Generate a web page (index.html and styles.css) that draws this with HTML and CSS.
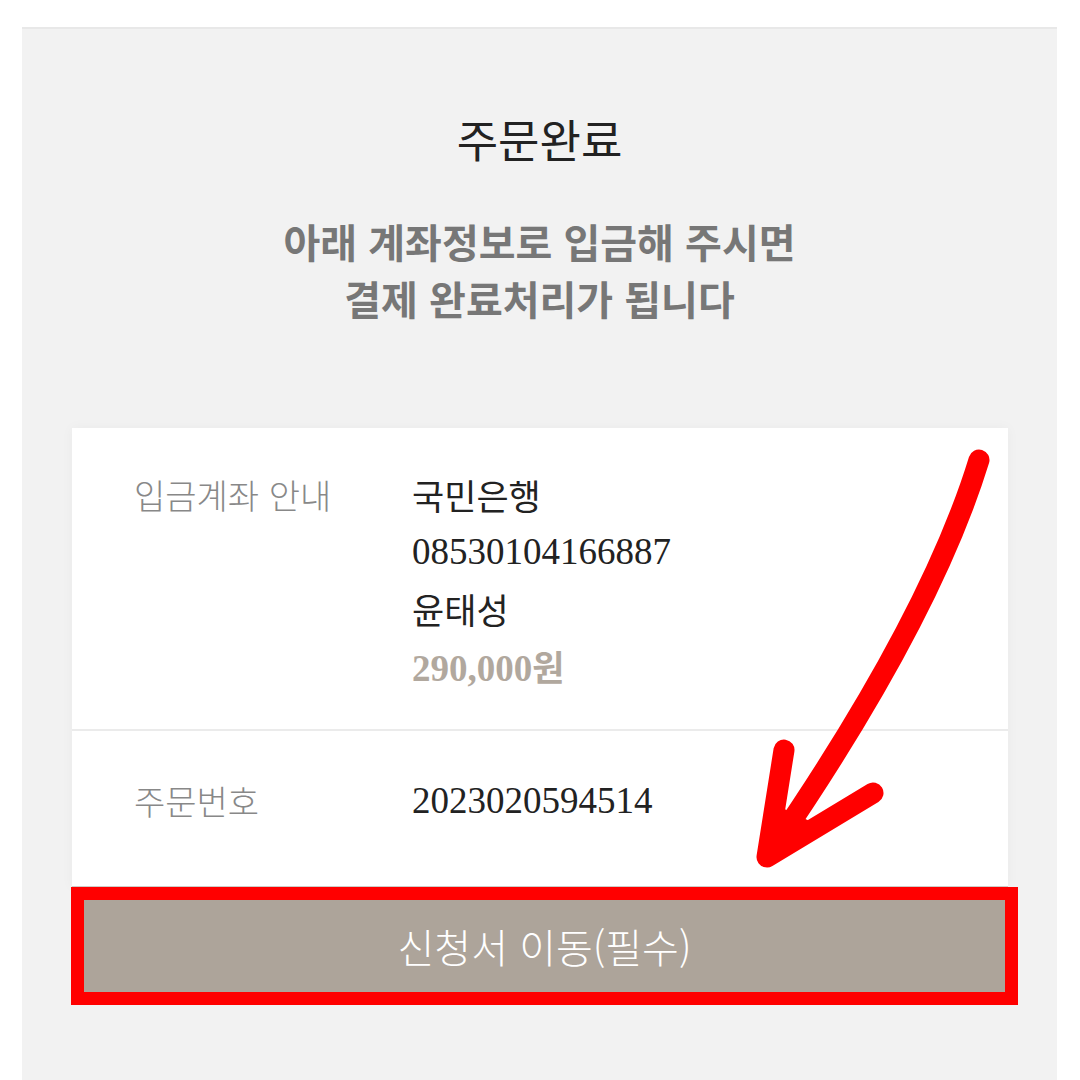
FILE: index.html
```html
<!DOCTYPE html>
<html lang="ko">

<head>
    <meta charset="UTF-8">
    <meta name="viewport" content="width=device-width, initial-scale=1.0">
    <title>주문완료</title>
    <link rel="stylesheet" href="styles.css">
</head>

<body>
    <div class="panel">
        <h1 class="title">주문완료</h1>
        <p class="notice">아래 계좌정보로 입금해 주시면<br>결제 완료처리가 됩니다</p>

        <div class="order-box">
            <div class="info">
                <div class="row row-bank">
                    <div class="label">입금계좌 안내</div>
                    <div class="value">
                        <div class="line">국민은행</div>
                        <div class="line num">08530104166887</div>
                        <div class="line">윤태성</div>
                        <div class="line price"><span class="num">290,000</span>원</div>
                    </div>
                </div>
                <div class="row row-order">
                    <div class="label">주문번호</div>
                    <div class="value">
                        <div class="line num">2023020594514</div>
                    </div>
                </div>
            </div>
            <!-- 빨간 박스로 강조된 버튼 -->
            <div class="btn-wrap">
                <a class="btn" href="#apply">신청서 이동(필수)</a>
            </div>
        </div>
    </div>

    <!-- 손으로 그린 화살표 -->
    <svg class="arrow" width="1080" height="1080" viewBox="0 0 1080 1080">
        <path d="M979 460 Q 930 620 772 850" fill="none" stroke="#ff0000" stroke-width="21" stroke-linecap="round" />
        <path d="M784 750 L767 857 L873 793" fill="none" stroke="#ff0000" stroke-width="21" stroke-linecap="round" stroke-linejoin="round" />
        <polygon points="776 805 767 857 818 825" fill="#ff0000" />
    </svg>
</body>

</html>
```

FILE: styles.css
```css
body {
    margin: 0;
    background-color: #fff;
    font-family: 'Noto Sans CJK KR', 'Noto Sans', sans-serif;
    color: #222;
    position: relative;
    overflow: hidden;
}

.panel {
    margin: 27px 23px 0 22px;
    border-top: 2px solid #e8e8e8;
    background-color: #f2f2f2;
    min-height: 1060px;
    padding-top: 82px;
    box-sizing: border-box;
}

.title {
    margin: 0;
    text-align: center;
    font-size: 45px;
    font-weight: 400;
    line-height: 56px;
    color: #222;
}

.notice {
    margin: 46px 0 0;
    text-align: center;
    font-size: 40px;
    font-weight: 700;
    line-height: 57px;
    color: #777;
}

.order-box {
    margin: 101px 49px 0 50px;
}

.info {
    background-color: #fff;
    box-shadow: 0 0 12px rgba(0, 0, 0, 0.04);
    border-bottom: 1px solid #cfcbc6;
}

.row {
    display: flex;
    padding-left: 62px;
}

.row-bank {
    padding-top: 38px;
    padding-bottom: 35px;
    border-bottom: 2px solid #ebebeb;
}

.row-order {
    padding-top: 41px;
    padding-bottom: 57px;
}

.label {
    width: 278px;
    flex-shrink: 0;
    font-size: 34px;
    font-weight: 300;
    line-height: 57px;
    color: #888;
}

.value {
    font-size: 35px;
    color: #222;
}

.line {
    height: 57px;
    line-height: 57px;
}

.num {
    font-family: 'Liberation Serif', serif;
    font-size: 37px;
}

.price {
    font-weight: 700;
    color: #b1a89e;
}

.btn-wrap {
    margin: 0 -10px 0 -1px;
    border: 13px solid #ff0000;
}

.btn {
    display: block;
    height: 92px;
    line-height: 92px;
    background-color: #ada49a;
    text-align: center;
    color: #fff;
    font-size: 40px;
    font-weight: 300;
    text-decoration: none;
}

.arrow {
    position: absolute;
    top: 0;
    left: 0;
    pointer-events: none;
}
```
